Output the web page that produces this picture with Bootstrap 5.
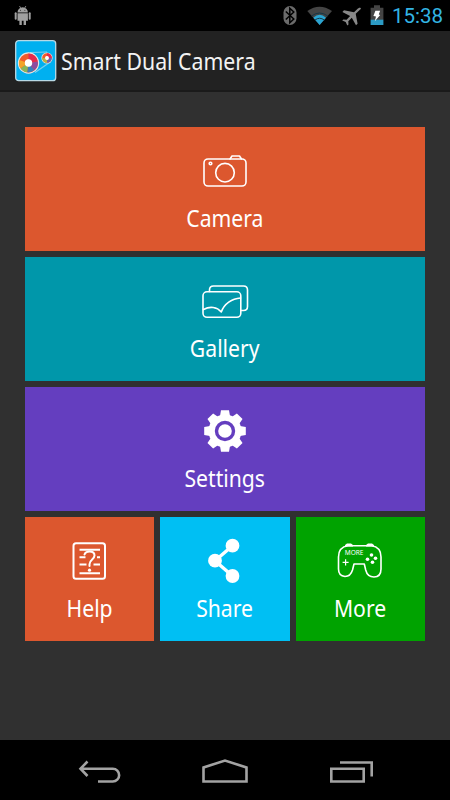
<!DOCTYPE html>
<html lang="en">
<head>
<meta charset="utf-8">
<meta name="viewport" content="width=device-width, initial-scale=1">
<title>Smart Dual Camera</title>
<link href="https://cdn.jsdelivr.net/npm/bootstrap@5.3.0/dist/css/bootstrap.min.css" rel="stylesheet">
<style>
body{background:#303030;font-family:"Noto Sans","Open Sans",sans-serif;color:#fff;height:800px;overflow:hidden}
svg{display:block;flex:none}
.statusbar{height:31px;background:#000;padding:0 8px 0 13px}
.clock{font-family:Roboto,sans-serif;font-size:20.5px;line-height:31px;padding-top:1px;color:#33b5e5;width:50px;white-space:nowrap}
.titlebar{height:61px;background:#222;border-bottom:2px solid #1a1a1a;padding:0 15px}
.app-title{font-size:23.5px;line-height:30px;padding-top:1px;transform:scaleX(.905);transform-origin:left;color:#f3f3f3;white-space:nowrap}
.menu{padding:35px 25px 0;gap:6px}
.menu-row{gap:6px}
.tile{height:124px;padding-top:20px;color:#fff;text-decoration:none;min-width:0}
.tile span{font-size:23.5px;line-height:30px;margin-top:8px;white-space:nowrap;transform:scaleX(.9)}
.line{fill:none;stroke:#fff;stroke-width:1.6;stroke-linejoin:round;stroke-linecap:round}
.t-camera{background:#dc572e}.t-gallery{background:#0097aa}.t-settings{background:#643ebf}
.t-share{background:#00bff3}.t-more{background:#00a300}
.navkeys{height:60px;background:#000}
.navkeys svg{fill:none;stroke:#a3a3a3;stroke-width:2.6}
</style>
<script src="https://cdn.jsdelivr.net/npm/bootstrap@5.3.0/dist/js/bootstrap.bundle.min.js"></script>
</head>
<body class="d-flex flex-column">
<div class="statusbar d-flex align-items-center justify-content-between">
  <svg width="20" height="31" fill="#a0a0a0">
    <path d="M4.500 12.400a5.200 5.200 0 0 1 10.400 0zM4.500 13.200h10.400v7.600H13V25h-2.400v-4.200H8.800V25H6.400v-4.200H4.500z"/>
    <path d="M6.500 6l1.300 2.200M12.900 6l-1.300 2.200" stroke="#a0a0a0" stroke-width=".8"/>
    <rect x="1.700" y="12.300" width="2" height="7.500" rx="1"/><rect x="15.700" y="12.300" width="2" height="7.500" rx="1"/>
    <circle cx="7.500" cy="10.200" r=".5" fill="#222"/><circle cx="11.900" cy="10.200" r=".5" fill="#222"/>
  </svg>
  <div class="d-flex align-items-center">
    <svg width="112" height="31" viewBox="280 0 112 31">
      <rect x="283.500" y="6" width="13" height="19" rx="6.500" fill="#6b6b6b"/>
      <path d="M285.800 11.500l8 7.500-4 3.800V8.200l4 3.800-8 7.500" fill="none" stroke="#000" stroke-width="1.500"/>
      <path d="M307.300 11Q319.500 2.500 332 11L319.600 25z" fill="#444"/>
      <path d="M313.300 17.700q6.300-5.700 12.700 0l-6.400 7.300z" fill="#2aa5d2"/>
      <path d="M311.500 16q8-6 16.300 0M315 20q4.600-3.500 9.300 0" stroke="#173644" stroke-width="1" fill="none"/>
      <path d="M360.800 8.200c-1-1-2.400-.2-3.400.8l-3.400 3.200-10-1.900-1.600 1.600 7.700 4.200-3.500 3.600-3.200-.3-1.200 1.200 3.500 1.500 1.600 3.500 1.200-1.200-.2-3.200 3.500-3.500 4.200 7.600 1.600-1.500-1.900-10 3.400-3.300c1-1 2.300-1.700 1.700-2.300z" fill="#888"/>
      <path d="M374 5.300h6v2.400h3.400V20h-12.800V7.700h3.400z" fill="#444"/>
      <rect x="370.600" y="19.700" width="12.800" height="5.300" fill="#2c9bc5"/>
      <path d="M375.400 10.800h4.700l-1.300 3.600 1.400.6-5.400 6.200 1.200-4.600-2.600-.7z" fill="#fff"/>
    </svg>
    <div class="clock">15:38</div>
  </div>
</div>
<header class="titlebar d-flex align-items-center">
  <svg width="42" height="42" viewBox="0 0 42 42">
    <rect x=".7" y=".7" width="40" height="40" rx="3" fill="#00b0f0" stroke="#b8d9e5" stroke-width="1.300"/>
    <path d="M15 12.500L32 12M20 32.500L36 21.500" stroke="#75cff0" stroke-width="1.200"/>
    <circle cx="13.500" cy="23" r="10.700" fill="#e6e6e6"/>
    <g fill="none" stroke-width="6" transform="translate(13.500 23)">
      <circle r="6.500" stroke="#f15b2b"/>
      <path d="M0-6.500A6.500 6.500 0 0 1 6.400-1" stroke="#e52a4f"/><path d="M6.400-1A6.500 6.500 0 0 1 4 5" stroke="#8d4c9e"/><path d="M4 5A6.500 6.500 0 0 1-1 6.400" stroke="#367ebd"/><path d="M-1 6.400A6.500 6.500 0 0 1-5.500 3.500" stroke="#8ab557"/><path d="M-5.500 3.500A6.500 6.500 0 0 1-6.300-2" stroke="#f3a328"/>
    </g>
    <circle cx="13.500" cy="23" r="3.700" fill="#fff"/>
    <circle cx="32" cy="18" r="5.600" fill="#e6e6e6"/>
    <g fill="none" stroke-width="3" transform="translate(32 18)">
      <circle r="3.300" stroke="#f15b2b"/><path d="M0-3.300A3.300 3.300 0 0 1 3.300 0" stroke="#e52a4f"/><path d="M3.300 0A3.300 3.300 0 0 1 0 3.300" stroke="#6d62ae"/><path d="M0 3.300A3.300 3.300 0 0 1-3.300 0" stroke="#b3b544"/>
    </g>
    <circle cx="32" cy="18" r="1.900" fill="#fff"/>
  </svg>
  <div class="app-title ms-1">Smart Dual Camera</div>
</header>
<main class="menu flex-grow-1 d-flex flex-column">
  <a class="tile t-camera d-flex flex-column align-items-center">
    <svg class="line" width="48" height="48">
      <rect x="3" y="12" width="42" height="27" rx="4"/><path d="M29 12l2-3h7.500l2 3"/><circle cx="24" cy="25.700" r="9.300"/><circle cx="9.500" cy="16.500" r="1.300"/>
    </svg><span>Camera</span>
  </a>
  <a class="tile t-gallery d-flex flex-column align-items-center">
    <svg class="line" width="48" height="48">
      <rect x="2" y="14.800" width="37.800" height="25.500" rx="4"/><path d="M8.500 14.500V13q0-4 4-4h30q4 0 4 4v16.500q0 4-4 4h-2.500"/><path d="M2.500 32.500C9 29 16 30 20.300 35 23 27 31 21.500 39.500 21"/>
    </svg><span>Gallery</span>
  </a>
  <a class="tile t-settings d-flex flex-column align-items-center">
    <svg width="48" height="48">
      <g transform="translate(24 24)" fill="#fff">
        <circle r="16.500"/>
        <path id="teeth" d="M-5-15l1-5.800h8l1 5.800zM-5 15l1 5.800h8l1-5.800zM-15-5l-5.800 1v8l5.800 1zM15-5l5.800 1v8L15 5z"/>
        <use href="#teeth" transform="rotate(45)"/>
        <circle r="8.500" fill="none" stroke="#643ebf" stroke-width="3.400"/>
      </g>
    </svg><span>Settings</span>
  </a>
  <div class="menu-row d-flex">
    <a class="tile t-camera d-flex flex-column align-items-center w-100">
      <svg class="line" width="48" height="48">
        <rect x="7.500" y="6.300" width="31.500" height="35.500" rx="2.500" stroke-width="2"/><path d="M13.500 12.700H34M13.500 20.300h6M31 20.300h3M13.500 27.400h7M27.500 27.400H34M13.500 36.300H34" stroke-linecap="butt" stroke-width="2"/>
        <path d="M18.500 17.500q1-3 5-3 5 0 5 4c0 4-5 4-5 8.700v1.800" stroke-width="2"/><circle cx="23.500" cy="33.200" r="1.600" stroke="none" fill="#fff"/>
      </svg><span>Help</span>
    </a>
    <a class="tile t-share d-flex flex-column align-items-center w-100">
      <svg width="48" height="48" fill="#fff">
        <path d="M31.500 8.700L14 23.700l17.500 15.300" fill="none" stroke="#fff" stroke-width="3.400"/><circle cx="31.500" cy="8.700" r="6.900"/><circle cx="14" cy="23.700" r="6.900"/><circle cx="31.500" cy="39" r="6.900"/>
      </svg><span>Share</span>
    </a>
    <a class="tile t-more d-flex flex-column align-items-center w-100">
      <svg width="48" height="48" fill="#fff">
        <path class="line" d="M12 8.700H35.500Q45 10 45 20V32Q45 40 38 40 31.500 40 29.700 33L28.300 27H18L16.500 33Q14.500 39.500 9 39.500 2.500 39 2.500 32V20Q2.500 10 12 8.700z"/>
        <path d="M9 8l2-1.600h4L17 8v1.500H9zM30 8l2-1.600h4L38 8v1.500h-8z"/>
        <text x="8.800" y="17.800" font-size="7" textLength="18.700" lengthAdjust="spacingAndGlyphs">MORE</text>
        <path d="M6.600 25.300h6M9.600 22.200v6.200" stroke="#fff" stroke-width="1.200"/>
        <circle cx="35.500" cy="18" r="1.800"/><circle cx="31.500" cy="22.200" r="1.800"/><circle cx="39.500" cy="21.300" r="1.800"/><circle cx="36.500" cy="25.300" r="1.800"/>
      </svg><span>More</span>
    </a>
  </div>
</main>
<nav class="navkeys d-flex justify-content-center">
  <svg width="300" height="60" viewBox="75 740 300 60">
    <path d="M87.500 761.500l-7 7.200 7 7.300M81 768.800h31.800a6.300 6.300 0 0 1 0 12.700H98"/>
    <path d="M203.500 781.500V767.500L225 760.500l21.500 7v14z"/>
    <path d="M331.300 768.800h32.400v12.700h-32.400zM340 762.500h31.700V776.500"/>
  </svg>
</nav>
</body>
</html>
